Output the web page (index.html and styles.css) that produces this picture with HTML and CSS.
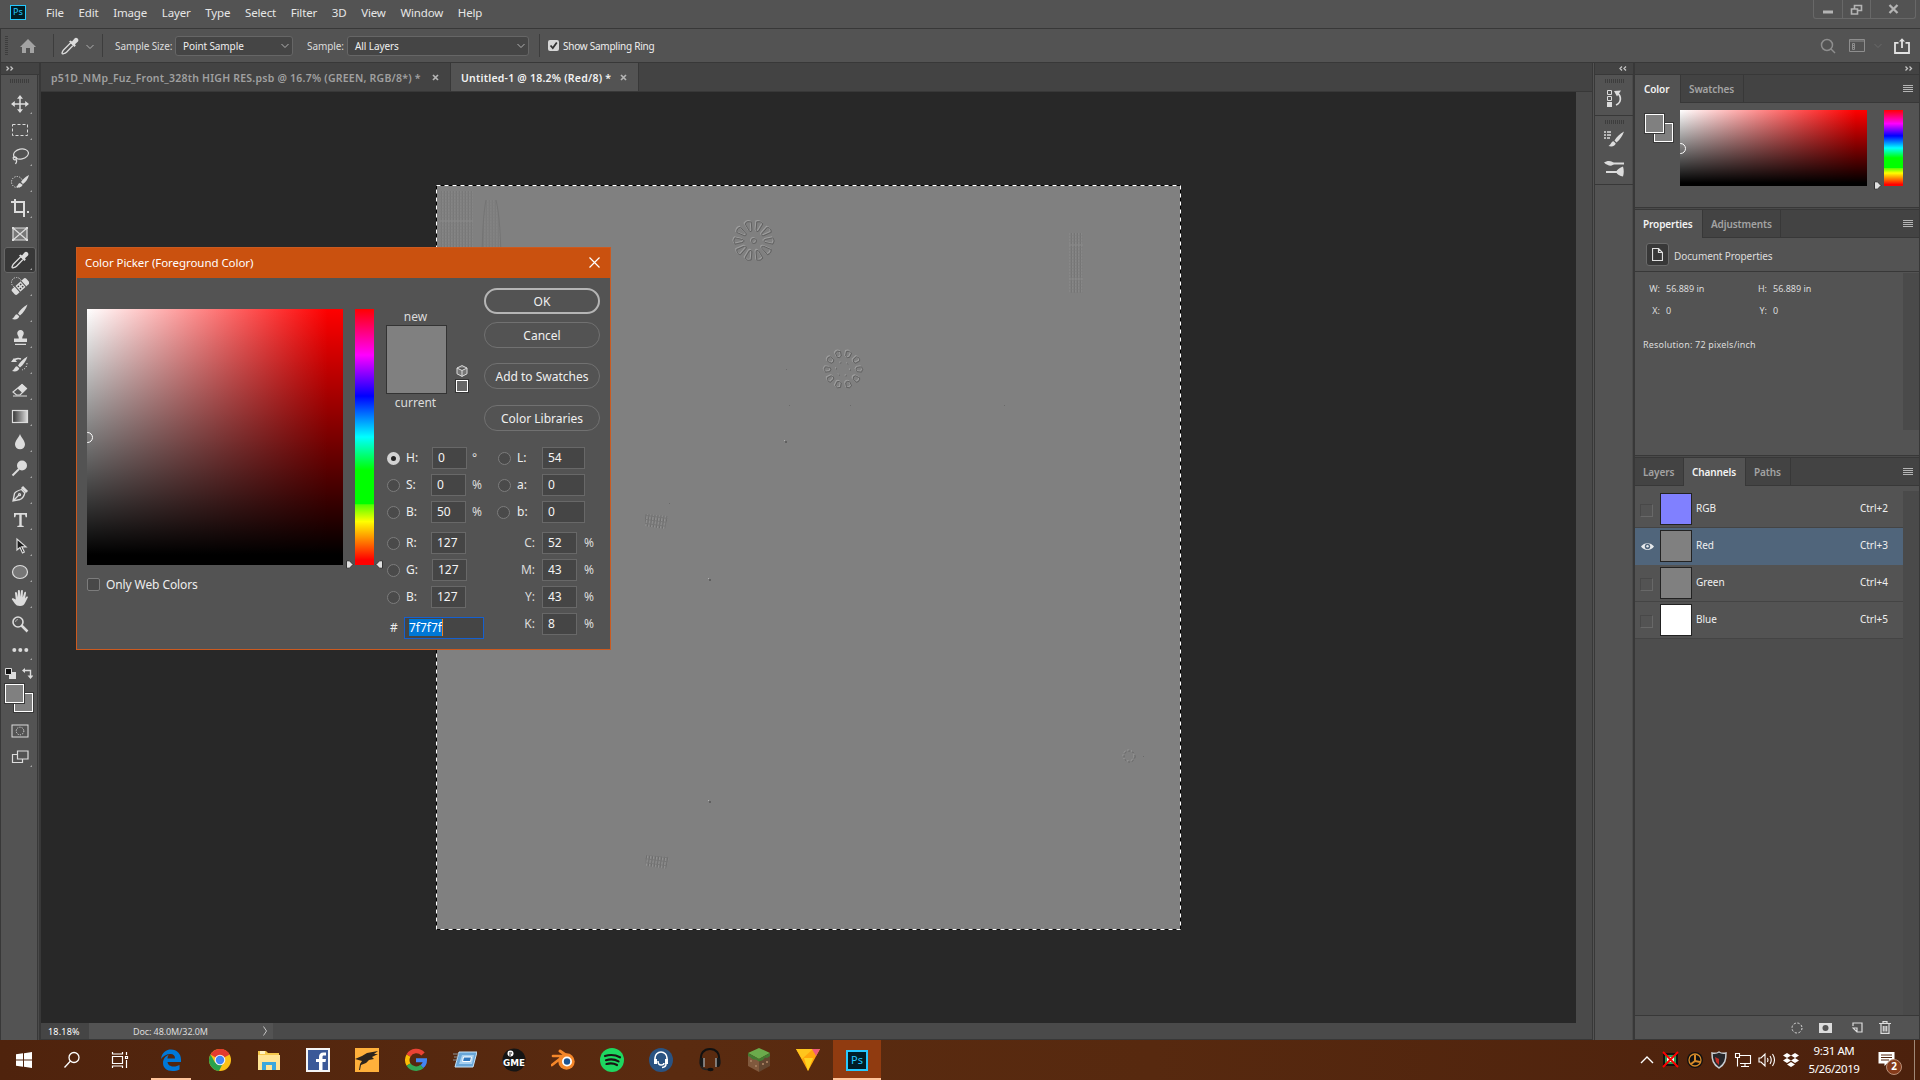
FILE: index.html
```html
<!DOCTYPE html>
<html lang="en">

<head>
    <meta charset="UTF-8">
    <meta name="viewport" content="width=device-width, initial-scale=1.0">
    <title>Untitled-1 @ 18.2% (Red/8)</title>
    <link rel="stylesheet" href="styles.css">
</head>

<body>
    <header class="menubar">
        <span class="ps-logo">Ps</span>
        <nav class="menu">
            <span>File</span><span>Edit</span><span>Image</span><span>Layer</span><span>Type</span><span>Select</span><span>Filter</span><span>3D</span><span>View</span><span>Window</span><span>Help</span>
        </nav>
        <div class="window-controls">
            <div><svg width="28" height="18"><path d="M9 12h10" stroke="#b4b4b4" stroke-width="3" /></svg></div>
            <div><svg width="27" height="18" fill="none" stroke="#b4b4b4" stroke-width="1.6"><path d="M11.5 9V5.500h7v5h-4M8.500 9h6v5h-6z" /></svg></div>
            <div><svg width="47" height="18"><path d="M18.500 5l8 8M26.500 5l-8 8" stroke="#b4b4b4" stroke-width="2.300" /></svg></div>
        </div>
    </header>

    <div class="options">
        <i class="grip-v"></i>
        <svg class="home" width="18" height="16"><path d="M9 1L1 9h2v6h4v-5h4v5h4V9h2z" fill="#a3a3a3" /></svg>
        <i class="rule"></i>
        <svg class="dropper" width="18" height="18"><use href="#i-dropper" /></svg>
        <svg class="chev" width="8" height="6"><path d="M.5 1l3.500 3.500L7.500 1" fill="none" stroke="#b0b0b0" /></svg>
        <i class="rule"></i>
        <label class="lbl-size">Sample Size:</label>
        <div class="select select-size">Point Sample<svg width="8" height="6"><path d="M.5 1l3.500 3.500L7.500 1" fill="none" stroke="#b0b0b0" /></svg></div>
        <label class="lbl-sample">Sample:</label>
        <div class="select select-layers">All Layers<svg width="8" height="6"><path d="M.5 1l3.500 3.500L7.500 1" fill="none" stroke="#b0b0b0" /></svg></div>
        <i class="rule"></i>
        <svg class="tick" width="11" height="11"><rect width="11" height="11" rx="2" fill="#d6d6d6" /><path d="M2.500 5.500l2.300 2.500 4-5.500" fill="none" stroke="#333" stroke-width="1.800" /></svg>
        <label class="lbl-ring">Show Sampling Ring</label>
        <div class="options-right">
            <svg width="16" height="16" fill="none" stroke="#8e8e8e" stroke-width="1.500"><circle cx="7" cy="7" r="5.500" /><path d="M11 11l4 4" /></svg>
            <svg width="16" height="14" fill="none" stroke="#8e8e8e"><path d="M.5 .5h15v12H.5zM.5 2h15M3.500 4.500h2v6h-2zM3.500 6.500h2M3.500 8.500h2" /></svg>
            <svg class="dim" width="8" height="6"><path d="M.5 1l3.500 3.500L7.500 1" fill="none" stroke="#6b6b6b" /></svg>
            <svg width="16" height="16" fill="none" stroke="#e3e3e3" stroke-width="1.800"><path d="M4.500 4.900H1V15h14V4.900h-3.500M8 10V2" /><path d="M5 3.500L8 .3l3 3.200z" fill="#e3e3e3" stroke="none" /></svg>
        </div>
    </div>

    <main class="workspace">
        <aside class="toolbar">
            <div class="strip-head"><svg width="8" height="5" fill="none" stroke="#c4c4c4" stroke-width="1.300"><path d="M.5 .5l2 2-2 2M4.500 .5l2 2-2 2" /></svg></div>
            <div class="grip"></div>
            <div class="tool"><svg viewBox="0 0 18 18"><path d="M9 1.500v15M1.500 9h15" stroke="#dcdcdc" stroke-width="1.500" /><path d="M9 0l3 3.800H6zM9 18l3-3.800H6zM0 9l3.800-3v6zM18 9l-3.800-3v6z" fill="#dcdcdc" /></svg></div>
            <div class="tool"><svg viewBox="0 0 18 18"><rect x="1.500" y="3.500" width="15" height="11" fill="none" stroke="#dcdcdc" stroke-dasharray="3 2" /></svg></div>
            <div class="tool"><svg viewBox="0 0 18 18" fill="none" stroke="#dcdcdc" stroke-width="1.200"><ellipse cx="10" cy="7" rx="7.500" ry="5" transform="rotate(-12 10 7)" /><path d="M3 9.500c-2 2 0 4 2 3s0-3-2-2.500M5 12.500c1 1 .5 3-.5 4.500" /></svg></div>
            <div class="tool"><svg viewBox="0 0 18 18"><circle cx="6" cy="9" r="5.500" fill="none" stroke="#dcdcdc" stroke-dasharray="1.200 1.300" /><path d="M18 2c-4 2-6 4-8 7l2 2c3-2 5-5 6-9zM9 10c-2 0-2 3-4 4 3 1 6 0 6.500-2z" fill="#dcdcdc" /></svg></div>
            <div class="tool"><svg viewBox="0 0 18 18"><path d="M4 0v13h10M0 3h13v15M18 13h-2" fill="none" stroke="#dcdcdc" stroke-width="2" /></svg></div>
            <div class="tool plain"><svg viewBox="0 0 18 18"><path d="M2 3h14v12H2zM2 3l14 12M16 3L2 15" fill="#777" stroke="#dcdcdc" stroke-width="1.200" /><path d="M1 2h2v2H1zM15 2h2v2h-2zM1 14h2v2H1zM15 14h2v2h-2z" fill="#dcdcdc" /></svg></div>
            <div class="tool on"><svg viewBox="0 0 18 18"><g id="i-dropper"><path d="M10 5.500L2.500 13c-1 1-1 2-1.500 3 0 1 1 1 1.500.700 1-.2 2-.5 3-1.500L12.500 8z" fill="none" stroke="#dcdcdc" stroke-width="1.300" /><path d="M8 4.500l1.500-1 1.500 1 2.500-3c2-2 5 1 3.500 3l-3 2.700.8 1.300-1.300 1.500z" fill="#dcdcdc" /></g></svg></div>
            <div class="tool"><svg viewBox="0 0 18 18"><circle cx="5.500" cy="5.500" r="5" fill="none" stroke="#dcdcdc" stroke-dasharray="1.200 1.300" /><g transform="rotate(-42 9.500 9.500)"><rect x="0" y="5.700" width="19" height="7.600" rx="2" fill="#dcdcdc" /><path d="M5.500 5.500v8M13.500 5.500v8" stroke="#535353" /><path d="M8 8h.1M11 8h.1M8 11h.1M11 11h.1" stroke="#444" stroke-width="1.700" stroke-linecap="round" /></g></svg></div>
            <div class="tool"><svg viewBox="0 0 18 18"><g id="i-brush"><path d="M16.500 1.500C12 4 9 7 7 10.500l2 2c3.500-3 6-6.500 7.500-11zM6 11.300c-2.500.2-2 3.200-5 4.700 3.500 1 7 0 7.200-2.700z" fill="#dcdcdc" /></g></svg></div>
            <div class="tool"><svg viewBox="0 0 18 18"><path d="M9.500 1a3.300 3.300 0 013.200 4c-.3 1.500-1.500 2-1.500 4.500H16v3.500H3V9.500h4.800C7.800 7 6.600 6.500 6.300 5a3.300 3.300 0 013.200-4zM4 14.700h11V16H4z" fill="#dcdcdc" /></svg></div>
            <div class="tool"><svg viewBox="0 0 18 18"><use href="#i-brush" /><path d="M2 6.500C4 3.500 7 3 10 4" fill="none" stroke="#dcdcdc" stroke-width="1.600" /><path d="M0 7h6L3 3z" fill="#dcdcdc" /><path d="M16 8c0 4-2 6-5 7" fill="none" stroke="#dcdcdc" stroke-dasharray="1.200 1.600" /></svg></div>
            <div class="tool"><svg viewBox="0 0 18 18"><path d="M11 3.500l4.500 4L9 14H5.500L2 11z" fill="none" stroke="#dcdcdc" stroke-width="1.200" /><path d="M11 3l5 4.500-4.500 4.500-5-4.500zM2 14.500h14v1H2z" fill="#dcdcdc" /></svg></div>
            <div class="tool"><svg viewBox="0 0 18 18"><defs><linearGradient id="g-tool"><stop stop-color="#333" /><stop offset="1" stop-color="#ddd" /></linearGradient></defs><rect x="1.500" y="3.500" width="15" height="12" fill="url(#g-tool)" stroke="#dcdcdc" stroke-width="1.200" /></svg></div>
            <div class="tool"><svg viewBox="0 0 18 18"><path d="M9 1c1 3.500 5 6.500 5 10.500a5 4.800 0 01-10 0C4 7.500 8 4.500 9 1z" fill="#dcdcdc" /></svg></div>
            <div class="tool"><svg viewBox="0 0 18 18"><circle cx="11" cy="6.500" r="5" fill="#dcdcdc" /><path d="M8 10l-6.500 6.500" stroke="#dcdcdc" stroke-width="2" /></svg></div>
            <div class="tool"><svg viewBox="0 0 18 18" fill="none" stroke="#dcdcdc" stroke-width="1.300"><path d="M10.500 4.500C7 5.500 4.500 6.500 3.500 8.500L2 16l7-1.500c3-1 4-3.500 4.800-6.500zM2.500 15.500L8 10" /><circle cx="8.500" cy="9.700" r="1" /><path d="M11 2l5 5" stroke-width="3" /></svg></div>
            <div class="tool"><svg viewBox="0 0 18 18"><path d="M3 2h13v4.200h-1.300L14 3.700h-3.300V14.500l2 .4V16H6.300v-1.100l2-.4V3.700H5L4.300 6.200H3z" fill="#dcdcdc" /></svg></div>
            <div class="tool"><svg viewBox="0 0 18 18"><path d="M6 2v11l3-2.500 2.500 5.500 1.800-.9-2.500-5.300H15z" fill="#1d1d1d" stroke="#dcdcdc" stroke-width="1.200" /></svg></div>
            <div class="tool"><svg viewBox="0 0 18 18"><ellipse cx="9" cy="9" rx="7.500" ry="6.500" fill="#777" stroke="#dcdcdc" stroke-width="1.200" /></svg></div>
            <div class="tool"><svg viewBox="0 0 18 18"><path d="M4.800 10.500L4 4c0-1.200 1.700-1.200 2 0l.8 4.500L6.900 2c0-1.300 1.900-1.300 2 0l.3 6L10 1.800c.2-1.300 1.900-1.100 1.900 0L11.700 8.500l1.600-5c.4-1.100 1.900-.7 1.700.5l-1 5.500 1.300-1.700c.8-.9 2-.2 1.500.8L14 14c-1 2-2 3-5 3-2.500 0-4-.8-5.200-2.500L1 10.500c-.6-1 .7-1.800 1.700-1z" fill="#dcdcdc" /></svg></div>
            <div class="tool plain"><svg viewBox="0 0 18 18"><circle cx="7" cy="7" r="5" fill="none" stroke="#dcdcdc" stroke-width="1.600" /><path d="M4.500 7A2.500 2.500 0 017 4.500" fill="none" stroke="#aaa" /><path d="M10.500 10.500l6 6" stroke="#dcdcdc" stroke-width="2.500" /></svg></div>
            <div class="tool"><svg viewBox="0 0 18 18" fill="#dcdcdc"><circle cx="3.300" cy="9" r="2" /><circle cx="9.300" cy="9" r="2" /><circle cx="15.300" cy="9" r="2" /></svg></div>
            <div class="mini"><svg width="11" height="11"><path d="M4 4h7v7H4z" fill="#dcdcdc" /><path d="M.5 .5h6v6h-6z" fill="#111" stroke="#dcdcdc" /></svg><svg width="11" height="11"><path d="M3 2.500h5.500V8" fill="none" stroke="#dcdcdc" stroke-width="1.400" /><path d="M0 2.500L3 0v5zM5.500 7.500h6L8.500 11z" fill="#dcdcdc" /></svg></div>
            <div class="swatches"><i class="back"></i><i class="front"></i></div>
            <div class="tool plain"><svg viewBox="0 0 18 18" fill="none" stroke="#dcdcdc"><rect x="1" y="3" width="16" height="12" /><circle cx="9" cy="9" r="3.800" stroke-dasharray="1.200 1.200" /></svg></div>
            <div class="tool"><svg viewBox="0 0 18 18" fill="#535353" stroke="#dcdcdc" stroke-width="1.200"><path d="M1.500 6.500h10v8h-10z" /><path d="M6.500 3h10.500v8H6.500z" /></svg></div>
        </aside>

        <section class="document">
            <div class="doc-tabs">
                <div class="doc-tab tab-p51"><span>p51D_NMp_Fuz_Front_328th HIGH RES.psb @ 16.7% (GREEN, RGB/8*) *</span><svg width="7" height="7"><path d="M1 1l5 5M6 1L1 6" stroke="#b5b5b5" stroke-width="1.700" /></svg></div>
                <div class="doc-tab tab-untitled"><span>Untitled-1 @ 18.2% (Red/8) *</span><svg width="7" height="7"><path d="M1 1l5 5M6 1L1 6" stroke="#b5b5b5" stroke-width="1.700" /></svg></div>
            </div>
            <div class="view">
                <div class="pasteboard">
                    <svg class="artwork" width="745" height="745" viewBox="436 185 745 745">
                        <defs>
                            <pattern id="mesh" width="3" height="3" patternUnits="userSpaceOnUse"><path d="M.5 0v3" stroke="#747474" /><path d="M1.500 0v3" stroke="#888" /><path d="M0 1.500h3" stroke="#7a7a7a" stroke-width=".5" /></pattern>
                            <pattern id="mesh-tilt" width="3" height="4" patternUnits="userSpaceOnUse" patternTransform="rotate(8)"><path d="M.5 0v4" stroke="#6c6c6c" /><path d="M1.500 0v4" stroke="#929292" /><path d="M0 .5h3" stroke="#767676" /></pattern>
                            <path id="petal" d="M750.300 221.500q3.200-2.500 6.400 0l-1.800 8q-1.400 2.500-2.800 0z" />
                            <path id="blob" d="M840.300 351q2.700-2.500 5.400 0l-.6 4.500q-2.100 2-4.200 0z" />
                            <g id="wheels" fill="none">
                                <g id="petals"><use href="#petal" transform="rotate(18 753.500 240.500)" /><use href="#petal" transform="rotate(54 753.500 240.500)" /><use href="#petal" transform="rotate(90 753.500 240.500)" /><use href="#petal" transform="rotate(126 753.500 240.500)" /><use href="#petal" transform="rotate(162 753.500 240.500)" /></g>
                                <use href="#petals" transform="rotate(180 753.500 240.500)" />
                                <circle cx="753.500" cy="240.500" r="2.500" />
                                <g id="blobs"><use href="#blob" transform="rotate(18 843 369)" /><use href="#blob" transform="rotate(54 843 369)" /><use href="#blob" transform="rotate(90 843 369)" /><use href="#blob" transform="rotate(126 843 369)" /><use href="#blob" transform="rotate(162 843 369)" /></g>
                                <use href="#blobs" transform="rotate(180 843 369)" />
                                <circle cx="843" cy="369" r="7" stroke-dasharray="1.500 5.800" />
                                <circle cx="1129" cy="756" r="5.500" stroke-dasharray="2 2" />
                            </g>
                        </defs>
                        <rect x="436" y="185" width="745" height="745" fill="#808080" />
                        <use href="#wheels" stroke="#a0a0a0" transform="translate(-.5 -.5)" />
                        <use href="#wheels" stroke="#606060" stroke-width=".9" transform="translate(.5 .5)" />
                        <g fill="url(#mesh)">
                            <path d="M440 191h33v80h-33z" opacity=".65" />
                            <path d="M486 200h10q5 20 5 70h-19q0-50 4-70z" opacity=".4" />
                            <path d="M1069 233h14v60h-14z" opacity=".9" />
                        </g>
                        <path d="M645 514l23 2-3 13-20-3zM645 855l24 2-3 12-20-3z" fill="url(#mesh-tilt)" />
                        <path d="M440 221h33M1069 245h14M1069 279h14" stroke="#8a8a8a" />
                        <path d="M486 200q-4 20-4 70M496 200q5 20 5 70" stroke="#747474" fill="none" />
                        <path d="M785 441h2v2h-2zM709 579h2v2h-2zM709 801h2v2h-2z" fill="#606060" />
                        <path d="M786 369h1v1h-1zM789 405h1v1h-1zM850 405h1v1h-1zM1004 405h1v1h-1zM669 503h1v1h-1zM1143 756h1v1h-1z" fill="#6a6a6a" />
                        <path d="M784 440h1v1h-1zM708 578h1v1h-1zM708 800h1v1h-1z" fill="#b0b0b0" />
                        <path d="M436.500 185.500h744v744h-744z" fill="none" stroke="#000" />
                        <path d="M436.500 185.500h744v744h-744z" fill="none" stroke="#fff" stroke-dasharray="4 4" />
                    </svg>
                </div>
                <div class="vscroll"></div>
            </div>
            <footer class="status"><span class="zoom">18.18%</span><span class="docsize">Doc: 48.0M/32.0M<svg width="5" height="10"><path d="M.5 .5l3 4.500-3 4.500" fill="none" stroke="#c4c4c4" /></svg></span></footer>
        </section>

        <aside class="dock">
            <div class="strip-head right"><svg width="8" height="5" fill="none" stroke="#c4c4c4" stroke-width="1.300"><path d="M3 .5l-2 2 2 2M7 .5l-2 2 2 2" /></svg></div>
            <div class="dock-group one"><div class="grip"></div><svg width="18" height="18"><path d="M2.500 1.500h4v4h-4zM2.500 7.500h4v4h-4z" fill="none" stroke="#dcdcdc" /><path d="M2 13h5v5H2z" fill="#dcdcdc" /><path d="M11 16c5-2 6-8 1.500-12" fill="none" stroke="#dcdcdc" stroke-width="1.700" /><path d="M9 2l7-.5-4 6z" fill="#dcdcdc" /></svg></div>
            <div class="dock-group two"><div class="grip"></div><svg width="20" height="18"><g transform="translate(3.500 0)"><use href="#i-brush" /></g><path d="M0 2h2M3 2h4M0 5h2M3 5h4M0 8h2M3 8h3" stroke="#dcdcdc" stroke-width="1.500" /></svg><svg width="20" height="18"><path d="M9 4.500h11M2 13h11" stroke="#dcdcdc" stroke-width="2" /><path d="M0 3.500c3-2.500 9-2 10 1-1 3-6 3-10-1zM19 7.500c-3 1-6 3-7 5.500 1 2.500 4 4 7 4.500 1-3 1-7 0-10z" fill="#dcdcdc" /></svg></div>
        </aside>

        <aside class="panels">
            <div class="strip-head right"><svg width="8" height="5" fill="none" stroke="#c4c4c4" stroke-width="1.300"><path d="M.5 .5l2 2-2 2M4.500 .5l2 2-2 2" /></svg></div>
            <section class="panel color-panel">
                <div class="tabs"><span class="active t-color">Color</span><span class="t-swatches">Swatches</span><i class="burger"></i></div>
                <div class="color-body">
                    <div class="swatches"><i class="back"></i><i class="front"></i></div>
                    <div class="field"><i class="ring"></i></div>
                    <svg class="pointer" width="9" height="9"><path d="M1.500 .8h3L8 4.500 4.500 8.200h-3z" fill="#e0e0e0" stroke="#333" /></svg>
                    <div class="hue"></div>
                </div>
            </section>
            <section class="panel props-panel">
                <div class="tabs"><span class="active t-props">Properties</span><span class="t-adjust">Adjustments</span><i class="burger"></i></div>
                <div class="props-head"><span class="page"><svg width="11" height="13"><path d="M.5 .5h6l4 4v8H.5zM6.500 .5v4h4" fill="none" stroke="#e0e0e0" stroke-width="1.200" /></svg></span><span class="props-title">Document Properties</span></div>
                <div class="props-main">
                    <div class="props-grid">
                        <b>W:</b><span>56.889 in</span><b>H:</b><span>56.889 in</span>
                        <b>X:</b><span>0</span><b>Y:</b><span>0</span>
                        <p>Resolution: 72 pixels/inch</p>
                    </div>
                    <i class="track"></i>
                </div>
            </section>
            <section class="panel channels-panel">
                <div class="tabs"><span class="t-layers">Layers</span><span class="active t-channels">Channels</span><span class="t-paths">Paths</span><i class="burger"></i></div>
                <div class="channels">
                    <div class="rows">
                        <div class="channel"><i class="box"></i><i class="thumb rgb"></i><span>RGB</span><kbd>Ctrl+2</kbd></div>
                        <div class="channel selected"><svg class="eye" width="13" height="9"><path d="M0 4.500C3 0 10 0 13 4.500 10 9 3 9 0 4.500z" fill="#e6e9ec" /><circle cx="6.500" cy="4.500" r="2.700" fill="#50657b" /><circle cx="6.500" cy="4.200" r="1.200" fill="#e6e9ec" /></svg><i class="thumb"></i><span>Red</span><kbd>Ctrl+3</kbd></div>
                        <div class="channel"><i class="box"></i><i class="thumb"></i><span>Green</span><kbd>Ctrl+4</kbd></div>
                        <div class="channel"><i class="box"></i><i class="thumb blue"></i><span>Blue</span><kbd>Ctrl+5</kbd></div>
                    </div>
                    <i class="track"></i>
                </div>
                <div class="panel-foot">
                    <svg width="12" height="12"><circle cx="6" cy="6" r="5" fill="none" stroke="#dcdcdc" stroke-dasharray="2.200 1.700" /></svg>
                    <svg width="13" height="10"><path d="M0 0h13v10H0z" fill="#dcdcdc" /><circle cx="6.500" cy="5" r="3" fill="#535353" /></svg>
                    <svg class="new" width="11" height="11" fill="none" stroke="#dcdcdc" stroke-width="1.200"><path d="M1 4V1h9v9H5L1 6h4v4" /></svg>
                    <svg width="12" height="13" fill="none" stroke="#dcdcdc" stroke-width="1.200"><path d="M0 2.500h12M4 2V.6h4V2M2 3v9.300h8V3M4.300 5v5.500M6 5v5.500M7.700 5v5.500" /></svg>
                </div>
            </section>
        </aside>
    </main>

    <div class="dialog">
        <div class="dialog-title"><span>Color Picker (Foreground Color)</span><svg width="11" height="11"><path d="M.5 .5l10 10M10.500 .5l-10 10" stroke="#fff" stroke-width="1.200" /></svg></div>
        <div class="dialog-body">
            <div class="pick">
                <div class="field"><i class="ring"></i></div>
                <div class="web"><i></i>Only Web Colors</div>
            </div>
            <div class="slider">
                <svg width="9" height="9"><path d="M1.500 .8h3L8 4.500 4.500 8.200h-3z" fill="#e0e0e0" stroke="#333" /></svg>
                <div class="hue"></div>
                <svg width="9" height="9"><path d="M7.500 .8h-3L1 4.500l3.500 3.700h3z" fill="#e0e0e0" stroke="#333" /></svg>
            </div>
            <div class="settings">
                <div class="top">
                    <div class="compare"><span>new</span><i></i><span>current</span></div>
                    <div class="websafe"><svg width="12" height="12" fill="#777" stroke="#dcdcdc"><path d="M6 .6l5 2.400v5.800L6 11.400 1 8.800V3zM1 3l5 2.500L11 3M6 5.500v6" /></svg><i></i></div>
                    <div class="actions"><button class="ok">OK</button><button>Cancel</button><button class="add">Add to Swatches</button><button class="lib">Color Libraries</button></div>
                </div>
                <div class="values">
                    <div class="hsb">
                        <div><i class="radio checked"></i><label>H:</label><input class="in1" value="0"><em>°</em></div>
                        <div><i class="radio"></i><label>S:</label><input value="0"><em>%</em></div>
                        <div><i class="radio"></i><label>B:</label><input value="50"><em>%</em></div>
                        <div class="gap"><i class="radio"></i><label>R:</label><input value="127"></div>
                        <div><i class="radio"></i><label>G:</label><input class="in1" value="127"></div>
                        <div><i class="radio"></i><label>B:</label><input value="127"></div>
                        <div class="hex"><label>#</label><span><mark>7f7f7f</mark></span></div>
                    </div>
                    <div class="lab">
                        <div><i class="radio"></i><label>L:</label><input value="54"></div>
                        <div><i class="radio"></i><label>a:</label><input value="0"></div>
                        <div><i class="radio shift"></i><label>b:</label><input value="0"></div>
                        <div class="gap cmyk"><label>C:</label><input value="52"><em>%</em></div>
                        <div class="cmyk"><label>M:</label><input value="43"><em>%</em></div>
                        <div class="cmyk"><label>Y:</label><input value="43"><em>%</em></div>
                        <div class="cmyk"><label>K:</label><input value="8"><em>%</em></div>
                    </div>
                </div>
            </div>
        </div>
    </div>

    <footer class="taskbar">
        <div class="sys"><svg width="18" height="18" fill="#fff"><path d="M1 3.300l7-1V8.500H1zM9 2.200L17 1v7.500H9zM1 9.500h7v6.200l-7-1zM9 9.500h8V17l-8-1.200z" /></svg></div>
        <div class="sys"><svg width="18" height="18" fill="none" stroke="#fff" stroke-width="1.300"><circle cx="11" cy="6.500" r="5" /><path d="M7.500 10L1.500 16.500" /></svg></div>
        <div class="sys"><svg width="18" height="18" fill="none" stroke="#fff" stroke-width="1.200"><path d="M1.500 5.500h10v7h-10zM1.500 1v2h10V1M1.500 17v-2h10v2M15.500 1v3M15.500 9v8M14.500 5.500h2v2h-2z" /></svg></div>
        <div class="apps">
            <div class="app running"><svg viewBox="0 0 24 24"><path d="M2 11C3 4 7.500 1.500 12 1.500c6 0 10 4.500 10 10V14H8.500c.3 3 3 4.500 6 4.500 2.500 0 4.500-.6 6-1.500v4.500c-2 1-4.500 1.500-7 1.500-6 0-9.500-3.500-9.500-8 0-4 2.500-7 6-8.500-1 1-1.500 2.500-1.500 4H16c0-3-1.500-4.500-4.500-4.500C7.500 6 4 8 2 11z" fill="#0078d7" /></svg></div>
            <div class="app"><svg viewBox="0 0 24 24"><circle cx="12" cy="12" r="11" fill="#fbc116" /><path d="M12 12L2.500 6.500A11 11 0 0121.500 6.500z" fill="#e33b2e" /><path d="M2.500 6.500A11 11 0 0011 23l4-8-8-.5z" fill="#2aa24c" /><path d="M12 1a11 11 0 019.500 5.500H12z" fill="#e33b2e" /><circle cx="12" cy="12" r="5.300" fill="#f1f1f1" /><circle cx="12" cy="12" r="4.200" fill="#4285f4" /></svg></div>
            <div class="app"><svg viewBox="0 0 24 24"><path d="M1 3h8l2 2h11v17H1z" fill="#f5c84c" /><path d="M3 3h5v3H3z" fill="#fff3c0" /><path d="M1 7h22v15H1z" fill="#ffe494" /><path d="M5 22v-8h14v8h-4v-5H9v5z" fill="#39a7dd" /></svg></div>
            <div class="app"><svg viewBox="0 0 24 24"><path d="M0 0h24v24H0z" fill="#f5f5f5" /><path d="M2 2h20v20H2z" fill="#3b5998" /><path d="M13 22v-8h-3v-3h3V9c0-3 1.500-4.500 4.500-4.500H20v3h-2c-1.300 0-1.500.6-1.500 1.700V11H20l-.5 3h-3v8z" fill="#fff" /></svg></div>
            <div class="app"><svg viewBox="0 0 24 24"><path d="M0 0h24v24H0z" fill="#ffb03b" /><path d="M0 11l7-3 5-3 11-2-4 3h4l-6 3 2 2-5 1-3 3-5 2-1 5H4l1-6 2-3z" fill="#2c241c" /></svg></div>
            <div class="app"><svg viewBox="0 0 24 24" fill="none" stroke-width="4.500"><path d="M19 6A9 9 0 004.500 7.500" stroke="#ea4335" /><path d="M4.500 7.500a9 9 0 000 9" stroke="#fbbc05" /><path d="M4.500 16.500a9 9 0 0013.500 2" stroke="#34a853" /><path d="M18 18.500q3-2.500 3-6.300h-9" stroke="#4285f4" stroke-width="4" /></svg></div>
            <div class="app"><svg viewBox="0 0 24 24"><path d="M6 4h18l-4 15H2z" fill="#69a6d8" stroke="#c7e3f8" /><path d="M9 7h12l-2 9H6z" fill="#a6d0f1" /><path d="M10.500 9h8l-1 4.500h-8z" fill="#3177bd" stroke="#fff" /><path d="M0 6h6M1 9h4M0 12h4" stroke="#8b939a" /></svg></div>
            <div class="app"><svg viewBox="0 0 24 24"><circle cx="12" cy="12" r="11.500" fill="#151515" /><circle cx="8.500" cy="5.500" r="3" fill="#fff" /><path d="M7 5h3M8 6v2" stroke="#111" /><text x="1" y="18" textLength="22" lengthAdjust="spacingAndGlyphs" class="gme">GME</text></svg></div>
            <div class="app"><svg viewBox="0 0 24 24"><path d="M9 3l10 7" stroke="#f5872a" stroke-width="3" stroke-linecap="round" /><path d="M2 8h12M1 17l9-7" stroke="#f5872a" stroke-width="2.700" stroke-linecap="round" /><circle cx="15.500" cy="13.500" r="8.200" fill="#f5872a" /><circle cx="16" cy="13.500" r="5" fill="#fff" /><circle cx="16" cy="13.500" r="3.200" fill="#1f5593" /></svg></div>
            <div class="app"><svg viewBox="0 0 24 24"><circle cx="12" cy="12" r="12" fill="#1ed760" /><path d="M5 8q8-2.500 15 1.300M6 12.200q7-2 12.500 1.200M6.500 16q6-1.500 10.500 1" fill="none" stroke="#191414" stroke-width="2.200" stroke-linecap="round" /></svg></div>
            <div class="app"><svg viewBox="0 0 24 24"><circle cx="12" cy="12" r="12" fill="#2a5382" /><path d="M6 14V10a6 6 0 0112 0v4" fill="none" stroke="#fff" stroke-width="1.600" /><path d="M5 11h3v5H5zM16 11h3v5h-3z" fill="#fff" /><path d="M9 13q0 4 3 4t3-2M17 16q0 3-4 3.500" fill="none" stroke="#fff" stroke-width="1.500" /></svg></div>
            <div class="app"><svg viewBox="0 0 24 24"><path d="M3 13C2 5 6 1 12 1s10 4 9 12" fill="none" stroke="#111" stroke-width="2" /><path d="M2 10h4v9H3c-2-2-2-6-1-9zM18 10h4c1 3 1 7-1 9h-3z" fill="#171717" /><path d="M6 10v9M18 10v9" stroke="#999" stroke-width="1.500" /><path d="M3 18q1 4 8 3.500" fill="none" stroke="#222" stroke-width="1.500" /><ellipse cx="12.500" cy="21.500" rx="3" ry="1.700" fill="#111" /></svg></div>
            <div class="app"><svg viewBox="0 0 24 24"><path d="M1 6l11 5v13L1 18z" fill="#80593d" /><path d="M12 11l11-5v12l-11 6z" fill="#634630" /><path d="M12 0l11 5-11 6L1 5z" fill="#6bab4c" /><path d="M1 5l11 6 11-6v3l-3 2-2-.5-2 2.500-4 1.500-3-2-3 0-3-2.500L1 8z" fill="#437b31" /><path d="M3 12h2v2H3zM8 17h2v2H8zM15 15h2v2h-2zM19 13h2v2h-2z" fill="#a0795a" /></svg></div>
            <div class="app"><svg viewBox="0 0 24 24"><path d="M0 1h24L12 23z" fill="#ffa60d" /><path d="M0 1h17L6 11z" fill="#ffc51d" /><path d="M24 1h-8l4 7z" fill="#ef5b7c" /><path d="M12 23L8 10h9z" fill="#ffd321" /></svg></div>
            <div class="app running active"><span class="ps-logo big">Ps</span></div>
        </div>
        <div class="tray">
            <svg width="24" height="18" fill="none" stroke="#fff" stroke-width="1.400"><path d="M6 12l6-6 6 6" /></svg>
            <svg width="24" height="18"><path d="M4 2h15v13H4z" fill="#111" /><path d="M6 4h11v9H6z" fill="#2d9b4d" /><path d="M8 6h7v5H8z" fill="#eee" /><path d="M4 1l15 15M19 1L4 16" stroke="#f00" stroke-width="1.800" /></svg>
            <svg width="24" height="18"><circle cx="12" cy="9" r="8" fill="#111" /><circle cx="12" cy="9" r="6" fill="none" stroke="#d78a29" stroke-width="1.300" /><path d="M12 4v6l-4 3M12 10l5 1" fill="none" stroke="#d78a29" stroke-width="2" /></svg>
            <svg width="24" height="18"><path d="M5 2q4 1 7-1 3 2 7 1c0 7-1 11-7 15C6 13 5 9 5 2z" fill="#26262a" stroke="#c8ccd0" stroke-width="1.500" /><path d="M8 6l4 2v6l-3-3z" fill="#c32c24" /></svg>
            <svg width="24" height="18" fill="none" stroke="#fff" stroke-width="1.100"><path d="M9 4.500h10.500v8H9M14 13v2.500M10 15.500h8M4.500 2.500h4v4h-4zM6.500 6.500v9" /></svg>
            <svg width="24" height="18" fill="none" stroke="#fff" stroke-width="1.100"><path d="M4 7h2l4-4v12l-4-4H4zM12.500 7q1 2 0 4M15 5q2.500 4 0 8M17.500 3q4 6 0 12" /></svg>
            <svg width="24" height="18" fill="#fff"><path d="M8 2l4 2.500L8 7 4 4.500zM16 2l4 2.500L16 7l-4-2.500zM8 7l4 2.500L8 12 4 9.500zM16 7l4 2.500-4 2.500-4-2.500zM12 11l4 2.500-4 2.500-4-2.500z" /></svg>
            <div class="clock"><span>9:31 AM</span><span>5/26/2019</span></div>
            <div class="notes"><svg width="17" height="16"><path d="M.5 0h16v11.500H9L6.500 14v-2.500h-6z" fill="#fff" /><path d="M3 3h11M3 5.500h11M3 8h8" stroke="#52250e" /></svg><b>2</b></div>
        </div>
    </footer>
</body>

</html>
```
FILE: styles.css
```css
* {
    box-sizing: border-box;
}

body {
    margin: 0;
    width: 1920px;
    height: 1080px;
    overflow: hidden;
    display: flex;
    flex-direction: column;
    background: #535353;
    color: #dcdcdc;
    font-family: "Noto Sans", "Open Sans", sans-serif;
    font-size: 10px;
    white-space: nowrap;
    position: relative;
}

svg {
    display: block;
    flex: none;
}

i,
em {
    font-style: normal;
    flex: none;
}

/* menu bar */

.menubar {
    height: 29px;
    flex: none;
    display: flex;
    align-items: flex-start;
    padding-left: 10px;
    border-bottom: 1px solid #383838;
}

.ps-logo {
    width: 16px;
    height: 15px;
    margin-top: 5px;
    border: 1px solid #26c9ff;
    background: #001d26;
    color: #26c9ff;
    font-size: 9px;
    line-height: 12px;
    text-align: center;
}

.menu {
    display: flex;
    gap: 14.7px;
    padding-left: 20px;
    font-size: 11.5px;
    line-height: 26px;
    letter-spacing: -0.15px;
    color: #e6e6e6;
}

.window-controls {
    display: flex;
    width: 103px;
    height: 19px;
    margin-left: auto;
    margin-right: 4px;
    border: 1px solid #686868;
    border-top: 0;
    border-radius: 0 0 3px 3px;
}

.window-controls div + div {
    border-left: 1px solid #686868;
}

/* tool options */

.options {
    height: 34px;
    flex: none;
    display: flex;
    align-items: center;
    border-bottom: 1px solid #383838;
    border-left: 1px solid #383838;
    font-size: 10px;
    letter-spacing: -0.1px;
}

.grip-v {
    width: 3px;
    height: 20px;
    margin-left: 4px;
    background: repeating-linear-gradient(#3d3d3d 0 1px, transparent 1px 2px);
}

.home {
    margin-left: 11px;
}

.rule {
    width: 1px;
    height: 23px;
    background: #3d3d3d;
}

.home + .rule {
    margin-left: 16px;
}

.dropper {
    margin-left: 7px;
}

.chev {
    margin: 2px 8px 0 7px;
}

.lbl-size {
    width: 72px;
    padding-left: 12px;
}

.select {
    height: 20px;
    display: flex;
    align-items: center;
    justify-content: space-between;
    padding: 0 3px 0 7px;
    border: 1px solid #666;
    border-radius: 3px;
    background: #454545;
    color: #eee;
}

.select-size {
    width: 118px;
}

.lbl-sample {
    width: 54px;
    padding-left: 14px;
}

.select-layers {
    width: 182px;
    margin-right: 10px;
}

.tick {
    margin: 0 4px 0 8px;
}

.lbl-ring {
    color: #eee;
    letter-spacing: -0.25px;
}

.options-right {
    margin-left: auto;
    display: flex;
    align-items: center;
    padding-right: 10px;
    gap: 13px;
}

.dim {
    margin: 0 -1px 0 -4px;
}

/* workspace */

.workspace {
    flex: 1;
    min-height: 0;
    display: flex;
}

.strip-head {
    height: 12px;
    flex: none;
    display: flex;
    align-items: center;
    padding-left: 5px;
    background: #434343;
    border-bottom: 1px solid #383838;
}

.strip-head.right {
    justify-content: flex-end;
    padding: 0 6px 0 0;
}

.grip {
    width: 19px;
    height: 4px;
    margin: 4px auto 0;
    background: repeating-linear-gradient(90deg, #3d3d3d 0 1px, transparent 1px 2px);
}

.toolbar {
    width: 41px;
    flex: none;
    border: solid #383838;
    border-width: 0 2px 0 1px;
    box-shadow: inset -1px 0 #4a4a4a, inset -2px 0 #383838;
}

.toolbar .grip {
    margin: 4px 0 8px 9px;
}

.tool {
    width: 32px;
    height: 26px;
    margin-left: 3px;
    display: flex;
    align-items: center;
    justify-content: center;
    position: relative;
}

.tool svg {
    width: 18px;
    height: 18px;
}

.tool.on {
    background: #383838;
    box-shadow: inset 0 0 0 1px #666;
    border-radius: 3px;
}

/* corner mark for tools with a fly-out */
.tool:not(.plain)::after {
    content: "";
    position: absolute;
    right: 4px;
    bottom: 3px;
    border: 1.5px solid #a5a5a5;
    border-top-color: transparent;
    border-left-color: transparent;
}

.mini {
    display: flex;
    gap: 6px;
    margin: 5px 0 4px 4px;
}

.swatches {
    width: 30px;
    height: 30px;
    flex: none;
    position: relative;
}

.swatches i {
    position: absolute;
    width: 19px;
    height: 19px;
    border: 1px solid #fff;
    background: #808080;
    box-shadow: 0 0 0 1px #383838;
}

.swatches .back {
    right: 1px;
    bottom: 1px;
}

.swatches .front {
    left: 1px;
    top: 1px;
}

.toolbar .swatches {
    margin: 0 0 5px 3px;
}

.document {
    flex: 1;
    min-width: 0;
    display: flex;
    flex-direction: column;
    border-right: 1px solid #383838;
}

.doc-tabs {
    height: 29px;
    flex: none;
    display: flex;
    background: #434343;
    border-bottom: 1px solid #383838;
}

.doc-tab {
    display: flex;
    align-items: center;
    justify-content: space-between;
    padding: 1px 11px 0 10px;
    border-right: 1px solid #383838;
    font-size: 10.5px;
    font-weight: 600;
    letter-spacing: 0.23px;
    color: #a0a0a0;
}

.tab-p51 {
    width: 410px;
}

.tab-untitled {
    width: 188px;
    background: #535353;
    color: #f2f2f2;
}

.view {
    flex: 1;
    display: flex;
}

.pasteboard {
    flex: 1;
    background: #282828;
    padding: 93px 0 0 395px;
}

.vscroll {
    width: 16px;
    background: #4a4a4a;
}

.status {
    height: 17px;
    display: flex;
    background: #4a4a4a;
    border-bottom: 1px solid #383838;
    font-size: 9px;
    line-height: 17px;
    letter-spacing: -0.1px;
}

.zoom {
    width: 48px;
    padding-left: 7px;
    color: #fff;
    background: #454545;
    letter-spacing: 0.2px;
}

.docsize {
    width: 184px;
    display: flex;
    align-items: center;
    justify-content: space-between;
    padding: 0 5px 0 44px;
    background: #535353;
}

.dock {
    width: 41px;
    flex: none;
    border: solid #383838;
    border-width: 0 2px 0 1px;
    box-shadow: inset -1px 0 #4a4a4a;
    margin-left: 1px;
}

.dock-group {
    display: flex;
    flex-direction: column;
    align-items: center;
    border-bottom: 1px solid #383838;
}

.one {
    height: 41px;
    gap: 6px;
}

.two {
    height: 69px;
    gap: 6px;
}

.two svg + svg {
    margin-top: 5px;
}

.panels {
    width: 285px;
    flex: none;
    display: flex;
    flex-direction: column;
    border-right: 1px solid #383838;
}

.panel {
    flex: none;
    display: flex;
    flex-direction: column;
    border-bottom: 1px solid #383838;
    box-shadow: 0 1px #4a4a4a, 0 2px #383838;
}

.tabs {
    height: 28px;
    flex: none;
    display: flex;
    background: #434343;
    border-bottom: 1px solid #383838;
    font-size: 10px;
    font-weight: 600;
    line-height: 28px;
    letter-spacing: -0.1px;
    color: #a3a3a3;
}

.tabs span {
    padding-left: 8px;
    border-right: 1px solid #383838;
}

.tabs .active {
    height: 28px;
    background: #535353;
    color: #f4f4f4;
}

.burger {
    width: 10px;
    height: 7px;
    margin: 10px 6px 0 auto;
    background: repeating-linear-gradient(#b5b5b5 0 1px, transparent 1px 2px);
}

.tabs .t-color {
    width: 46px;
    padding-left: 9px;
}

.t-swatches {
    width: 63px;
}

.t-props {
    width: 68px;
}

.t-adjust {
    width: 78px;
}

.t-layers {
    width: 49px;
}

.t-channels {
    width: 62px;
}

.t-paths {
    width: 45px;
}

.color-panel {
    height: 133px;
    margin-bottom: 2px;
}

.color-body {
    display: flex;
    padding: 7px 0 0 9px;
}

.color-body .swatches {
    margin-top: 3px;
}

.field {
    position: relative;
    overflow: hidden;
    background: linear-gradient(transparent 0, #000 96%), linear-gradient(90deg, #fff, #f00 94%);
}

.ring {
    position: absolute;
    left: -5px;
    width: 11px;
    height: 11px;
    border: 1px solid #fff;
    border-radius: 50%;
}

.hue {
    background: linear-gradient(#f00, #f0f 18%, #00f 34%, #0ff 50%, #0f0 63%, #0f0 76%, #5f0 76.500%, #ff0 83%, #f00 98%);
}

.color-body .field {
    width: 187px;
    height: 76px;
    margin-left: 6px;
}

.color-body .ring {
    top: 33px;
}

.pointer {
    align-self: flex-end;
    margin: 0 0 -4px 6px;
}

.color-body .hue {
    width: 19px;
    height: 76px;
    margin-left: 2px;
}

.props-panel {
    height: 246px;
    margin-bottom: 2px;
}

.props-head {
    height: 34px;
    flex: none;
    display: flex;
    align-items: center;
    gap: 5px;
    padding-left: 11px;
    border-bottom: 1px solid #383838;
}

.props-title {
    padding-top: 2px;
    letter-spacing: -0.1px;
}

.page {
    width: 23px;
    height: 23px;
    display: flex;
    align-items: center;
    justify-content: center;
    background: #383838;
    border: 1px solid #6a6a6a;
    border-radius: 3px;
}

.props-main {
    flex: 1;
    display: flex;
    justify-content: space-between;
}

.props-grid {
    display: grid;
    grid-template-columns: 17px 90px 17px 60px;
    grid-template-rows: 22px 22px 46px;
    align-content: start;
    align-items: center;
    padding: 5px 0 0 8px;
    font-size: 9px;
}

.props-grid b {
    font-weight: 400;
    text-align: right;
}

.props-grid span {
    padding-left: 6px;
}

.props-grid p {
    grid-column: 1 / -1;
    margin: 0;
    letter-spacing: 0.2px;
}

.track {
    width: 16px;
    background: #4a4a4a;
}

.props-main .track {
    height: 157px;
    margin-top: 1px;
}

.channels-panel {
    height: 582px;
    box-shadow: none;
}

.channels {
    flex: 1;
    display: flex;
    padding-top: 5px;
}

.rows {
    flex: 1;
    background: #4d4d4d;
}

.channel {
    height: 37px;
    display: flex;
    align-items: center;
    padding-left: 5px;
    background: #535353;
    border-bottom: 1px solid #444;
    font-size: 10px;
    color: #f0f0f0;
}

.channel.selected {
    background: #50657b;
    border-color: #50657b;
}

.channel span,
.channel kbd {
    margin-bottom: 3px;
}

.box {
    width: 13px;
    height: 13px;
    margin-top: 3px;
    border: 1px solid #484848;
    border-right-color: #686868;
    border-bottom-color: #686868;
}

.eye {
    margin-left: 1px;
    margin-right: -1px;
}

.thumb {
    width: 32px;
    height: 32px;
    margin: 0 4px 0 7px;
    border: 1px solid #222;
    background: #808080;
}

.rgb {
    background: #8080ff;
}

.blue {
    background: #fff;
}

kbd {
    font: inherit;
    margin-left: auto;
    padding-right: 15px;
}

.panel-foot {
    height: 24px;
    display: flex;
    align-items: center;
    justify-content: flex-end;
    padding-right: 28px;
    gap: 16px;
    border-top: 1px solid #383838;
}

.new {
    margin-left: 4px;
}

/* color picker */

.dialog {
    position: absolute;
    left: 76px;
    top: 247px;
    width: 535px;
    height: 403px;
    border: 1px solid #cc5a1f;
    background: #535353;
    font-size: 12px;
}

.dialog-title {
    height: 30px;
    display: flex;
    align-items: center;
    justify-content: space-between;
    padding: 0 10px 2px 8px;
    background: #ca510f;
    color: #fff;
    font-size: 11.500px;
    letter-spacing: -0.06px;
}

.dialog-body {
    display: flex;
    padding-left: 10px;
}

.pick {
    padding-top: 31px;
}

.pick .field {
    width: 256px;
    height: 256px;
}

.pick .ring {
    top: 123px;
}

.web {
    display: flex;
    align-items: center;
    gap: 6px;
    margin-top: 11px;
    color: #eee;
    letter-spacing: -0.1px;
}

.web i {
    width: 13px;
    height: 13px;
    border: 1px solid #7c7c7c;
    border-radius: 2px;
    background: #484848;
}

.slider {
    display: flex;
    align-items: flex-end;
    align-self: flex-start;
    padding: 31px 0 0 1px;
}

.slider svg {
    margin: 0 1px -4px;
}

.slider .hue {
    width: 19px;
    height: 256px;
}

.settings {
    padding-left: 1px;
}

.top {
    display: flex;
    height: 159px;
}

.compare {
    width: 61px;
    padding-top: 30px;
    text-align: center;
}

.compare span {
    display: block;
    line-height: 17px;
    margin-left: -2px;
}

.compare i {
    display: block;
    height: 69px;
    background: #808080;
    border: 1px solid #333;
}

.websafe {
    padding: 87px 0 0 8px;
}

.websafe svg {
    margin-left: 1px;
}

.websafe i {
    display: block;
    width: 14px;
    height: 14px;
    margin-top: 2px;
    border: 1px solid #333;
    background: #666;
    box-shadow: inset 0 0 0 1px #fff;
}

.actions {
    display: flex;
    flex-direction: column;
    padding: 10px 0 0 15px;
}

button {
    width: 116px;
    height: 26px;
    flex: none;
    margin-bottom: 8px;
    padding: 1px 0 0;
    border: 1px solid #717171;
    border-radius: 13px;
    background: none;
    color: #f0f0f0;
    font: inherit;
}

button.ok {
    border: 2px solid #b5b5b5;
}

button.add {
    margin: 7px 0 16px;
}

.values {
    display: flex;
    padding-top: 10px;
}

.hsb {
    width: 111px;
}

.hsb > div,
.lab > div {
    height: 27px;
    display: flex;
    align-items: flex-start;
    line-height: 22px;
}

.values .gap {
    margin-top: 4px;
}

.radio {
    width: 13px;
    height: 13px;
    margin: 5px 0 0 1px;
    border: 1px solid #7c7c7c;
    border-radius: 50%;
    background: #4a4a4a;
}

.radio.checked {
    border: 4px solid #d2d2d2;
    background: #222;
}

.radio.shift {
    margin: 5px 1px 0 0;
}

.values label {
    color: #eee;
}

.values .radio + label {
    width: 31px;
    padding-left: 6px;
}

input {
    width: 35px;
    height: 22px;
    padding: 0 0 0 5px;
    border: 1px solid #686868;
    background: #454545;
    color: #f4f4f4;
    font: inherit;
}

.hsb .in1 {
    margin-left: 1px;
    margin-right: -1px;
}

.values em {
    padding-left: 6px;
}

.hsb .hex {
    margin-top: 4px;
}

.hex label {
    width: 18px;
    padding-left: 4px;
}

.hex span {
    width: 80px;
    height: 22px;
    border: 1px solid #1560d0;
    background: #454545;
    padding-left: 4px;
    line-height: 19px;
}

mark {
    background: #0078d7;
    color: #fff;
    border-right: 1px solid #f08020;
}

.lab .radio + label {
    width: 31px;
}

.lab input {
    width: 43px;
}

.lab .cmyk label {
    width: 38px;
    margin-right: 7px;
    text-align: right;
    color: #dcdcdc;
}

.lab .cmyk input {
    width: 35px;
}

.cmyk em {
    padding-left: 7px;
}

/* taskbar */

.taskbar {
    height: 40px;
    flex: none;
    display: flex;
    background: linear-gradient(90deg, #4f230d, #5a2b10 35%, #57290f 60%, #4c210d);
}

.sys {
    width: 48px;
    display: flex;
    align-items: center;
    justify-content: center;
}

.apps {
    display: flex;
    gap: 1px;
    padding-left: 3px;
}

.app {
    width: 48px;
    display: flex;
    align-items: center;
    justify-content: center;
}

.app svg {
    width: 24px;
    height: 24px;
}

.running {
    background: linear-gradient(#ffc49b, #ffc49b) bottom / 40px 2px no-repeat;
}

.app.active {
    background: linear-gradient(#ffc49b, #ffc49b) bottom / 100% 2px no-repeat, #903b10;
}

.ps-logo.big {
    width: 22px;
    height: 21px;
    margin: 0;
    border-width: 2px;
    font-size: 11px;
    line-height: 16px;
}

.gme {
    font: bold 9px "DejaVu Sans", sans-serif;
    fill: #fff;
}

.tray {
    margin-left: auto;
    display: flex;
    align-items: center;
    width: 285px;
    color: #fff;
}

.clock {
    width: 62px;
    margin-right: 2px;
    display: flex;
    flex-direction: column;
    text-align: center;
    font-size: 11.500px;
    line-height: 18px;
    letter-spacing: -0.400px;
}

.notes {
    width: 48px;
    height: 40px;
    padding: 12px 0 0 11px;
    border-right: 1px solid #a08878;
    position: relative;
}

.notes b {
    position: absolute;
    left: 19px;
    top: 19px;
    width: 16px;
    height: 16px;
    border: 1px solid #b98f78;
    border-radius: 50%;
    background: #853b1b;
    font-size: 10px;
    line-height: 13px;
    text-align: center;
}
```
